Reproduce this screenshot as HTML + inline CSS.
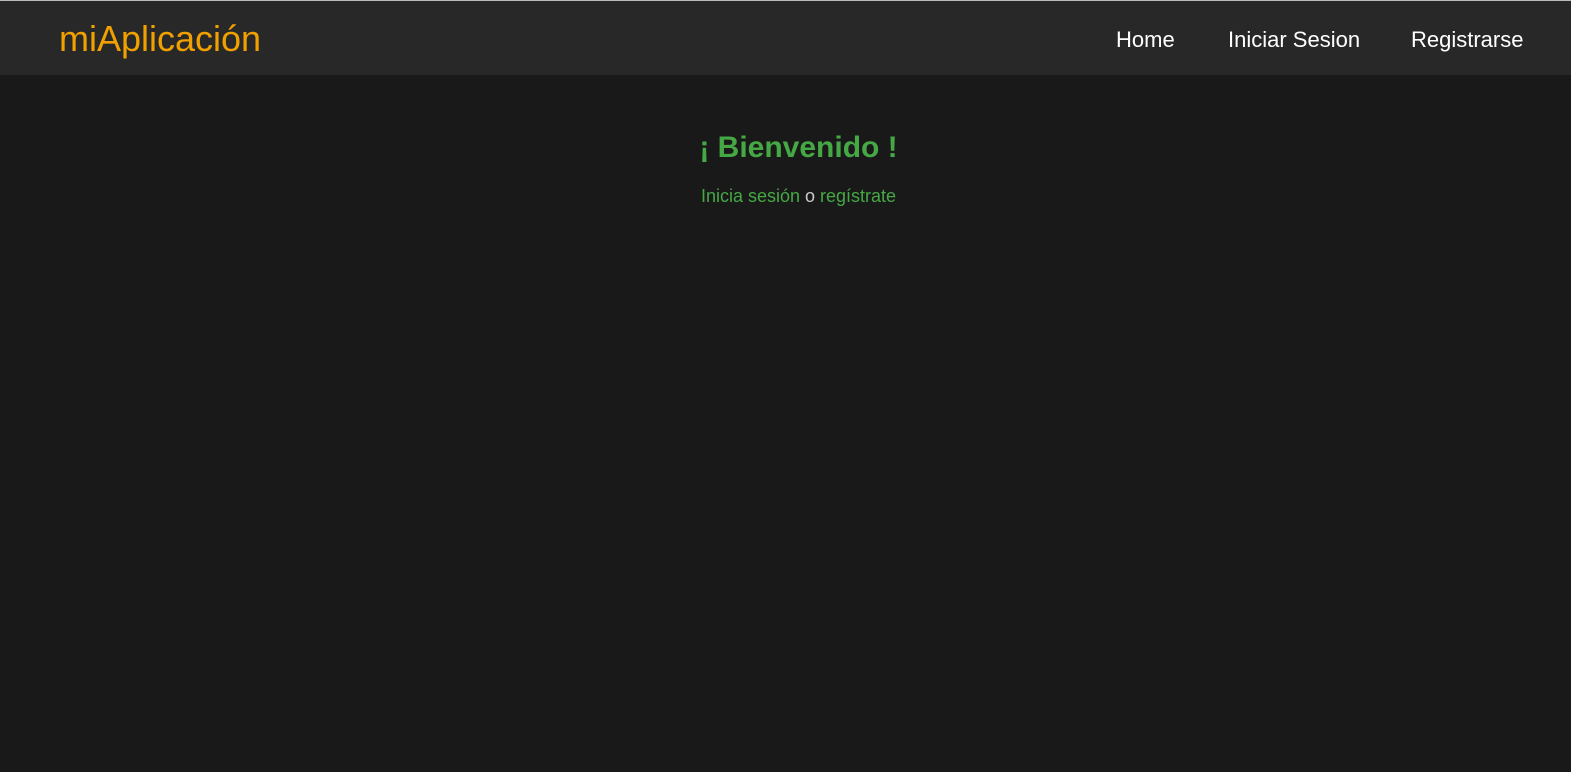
<!DOCTYPE html>
<html><head><meta charset="utf-8"><style>
html,body{margin:0;padding:0;background:#fff;}
#app{position:absolute;left:0;top:0;width:1571px;height:772px;background:#191919;font-family:"Liberation Sans",sans-serif;border-top:1px solid #bbb;box-sizing:border-box;}
header{height:74px;background:#282828;position:relative;}
.logo{position:absolute;left:59px;top:17px;font-size:36px;color:#f0a000;}
nav a{position:absolute;top:26px;font-size:22px;color:#fff;text-decoration:none;}
h1{position:absolute;left:7px;width:1583px;text-align:center;top:130px;margin:0;font-size:30px;color:#45a845;font-weight:bold;}
p{position:absolute;left:7px;width:1583px;text-align:center;top:185px;margin:0;font-size:18px;color:#45a845;}
p span{color:#ccc;}
</style></head><body><div id="app">
<header><div class="logo">miAplicación</div>
<nav><a style="left:1116px">Home</a><a style="left:1228px">Iniciar Sesion</a><a style="left:1411px">Registrarse</a></nav></header>
<h1>¡ Bienvenido !</h1>
<p>Inicia sesión <span>o</span> regístrate</p>
</div></body></html>
